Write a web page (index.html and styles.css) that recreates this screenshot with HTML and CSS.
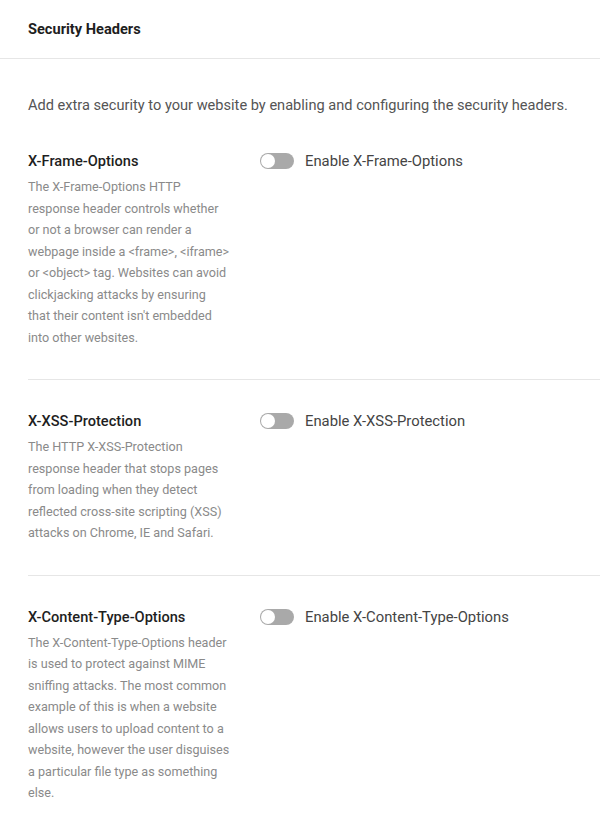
FILE: index.html
```html
<!DOCTYPE html>
<html>
<head>
<meta charset="utf-8">
<link rel="stylesheet" href="styles.css">
</head>
<body>
<div class="page">
  <header class="header">
    <h1 class="title">Security Headers</h1>
  </header>
  <p class="intro">Add extra security to your website by enabling and configuring the security headers.</p>
  <div class="sections">
    <section class="section first">
      <div class="info">
        <h2 class="name">X-Frame-Options</h2>
        <p class="desc">The X-Frame-Options HTTP response header controls whether or not a browser can render a webpage inside a &lt;frame&gt;, &lt;iframe&gt; or &lt;object&gt; tag. Websites can avoid clickjacking attacks by ensuring that their content isn't embedded into other websites.</p>
      </div>
      <label class="control"><span class="toggle"><span class="knob"></span></span><span class="label">Enable X-Frame-Options</span></label>
    </section>
    <section class="section">
      <div class="info">
        <h2 class="name">X-XSS-Protection</h2>
        <p class="desc">The HTTP X-XSS-Protection response header that stops pages from loading when they detect reflected cross-site scripting (XSS) attacks on Chrome, IE and Safari.</p>
      </div>
      <label class="control"><span class="toggle"><span class="knob"></span></span><span class="label">Enable X-XSS-Protection</span></label>
    </section>
    <section class="section">
      <div class="info">
        <h2 class="name">X-Content-Type-Options</h2>
        <p class="desc">The X-Content-Type-Options header is used to protect against MIME sniffing attacks. The most common example of this is when a website allows users to upload content to a website, however the user disguises a particular file type as something else.</p>
      </div>
      <label class="control"><span class="toggle"><span class="knob"></span></span><span class="label">Enable X-Content-Type-Options</span></label>
    </section>
  </div>
</div>
</body>
</html>
```
FILE: styles.css
```css
html, body {
  margin: 0;
  padding: 0;
  background: #fff;
}
body {
  font-family: Roboto, "Liberation Sans", sans-serif;
  color: #1e1e1e;
}
.header {
  height: 58px;
  padding: 0 28px;
  display: flex;
  align-items: center;
  border-bottom: 1px solid #e6e6e6;
}
.title {
  margin: 0;
  font-size: 14.6px;
  font-weight: 700;
  line-height: 20px;
  color: #1e1e1e;
}
.intro {
  margin: 34px 0 0 28px;
  font-size: 14.6px;
  line-height: 24px;
  color: #555;
}
.sections {
  margin-left: 28px;
  margin-top: 34px;
}
.section {
  display: flex;
  gap: 30px;
  padding: 31px 0 31px;
  border-top: 1px solid #e6e6e6;
}
.section.first {
  border-top: none;
  padding-top: 0;
}
.info {
  width: 202px;
  flex: none;
}
.name {
  margin: 0;
  font-size: 14.6px;
  font-weight: 500;
  line-height: 20px;
  color: #1e1e1e;
}
.desc {
  margin: 5px 0 0;
  font-size: 12.6px;
  line-height: 21.5px;
  color: #8a8a8a;
}
.control {
  display: flex;
  align-items: center;
  gap: 11px;
  height: 20px;
}
.toggle {
  width: 34px;
  height: 16px;
  border-radius: 8px;
  background: #a9a9a9;
  position: relative;
  flex: none;
}
.knob {
  position: absolute;
  left: 1px;
  top: 1px;
  width: 14px;
  height: 14px;
  border-radius: 50%;
  background: #fff;
}
.label {
  font-size: 14.8px;
  color: #444;
  line-height: 20px;
}
```
